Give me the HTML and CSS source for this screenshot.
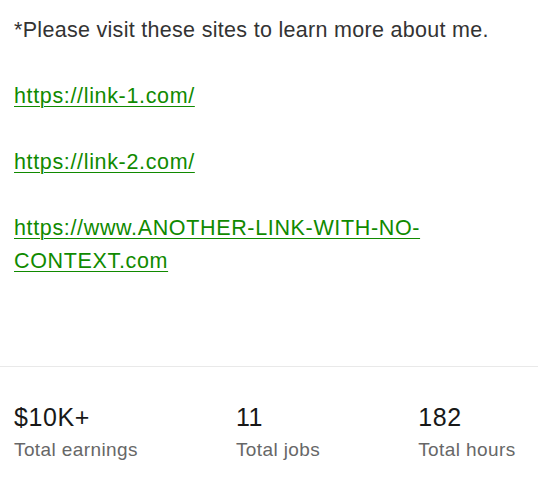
FILE: index.html
```html
<!DOCTYPE html>
<html>
<head>
<meta charset="utf-8">
<link rel="stylesheet" href="styles.css">
</head>
<body>
<div class="page">
  <div class="desc">
    <p class="line">*Please visit these sites to learn more about me.</p>
    <p class="line"><a href="#">https://link-1.com/</a></p>
    <p class="line"><a href="#">https://link-2.com/</a></p>
    <p class="line"><a href="#">https://www.ANOTHER-LINK-WITH-NO-CONTEXT.com</a></p>
  </div>
  <div class="divider"></div>
  <div class="stats">
    <div class="stat">
      <div class="value">$10K+</div>
      <div class="label">Total earnings</div>
    </div>
    <div class="stat">
      <div class="value">11</div>
      <div class="label">Total jobs</div>
    </div>
    <div class="stat">
      <div class="value">182</div>
      <div class="label">Total hours</div>
    </div>
  </div>
</div>
</body>
</html>
```
FILE: styles.css
```css
html, body {
  margin: 0;
  padding: 0;
  background: #ffffff;
}
.page {
  font-family: "Liberation Sans", Arial, sans-serif;
  color: #222222;
}
.desc {
  padding: 14px 14px 0 14px;
  height: 352px;
  box-sizing: border-box;
}
.line {
  margin: 0 0 33px 0;
  font-size: 21.5px;
  letter-spacing: 0.3px;
  line-height: 33px;
  color: #333333;
}
.line a {
  color: #108a00;
  letter-spacing: 0.65px;
  text-decoration: underline;
  text-underline-offset: 3px;
  text-decoration-thickness: 1px;
}
.divider {
  height: 1px;
  background: #e9e9e9;
  margin-top: 14px;
}
.stats {
  display: flex;
  gap: 98px;
  padding: 34px 14px 0 14px;
}
.stat .value {
  font-size: 25px;
  letter-spacing: 0.6px;
  line-height: 32px;
  color: #181818;
}
.stat .label {
  font-size: 19px;
  letter-spacing: 0.4px;
  line-height: 32px;
  margin-top: 1px;
  color: #676767;
}
```
